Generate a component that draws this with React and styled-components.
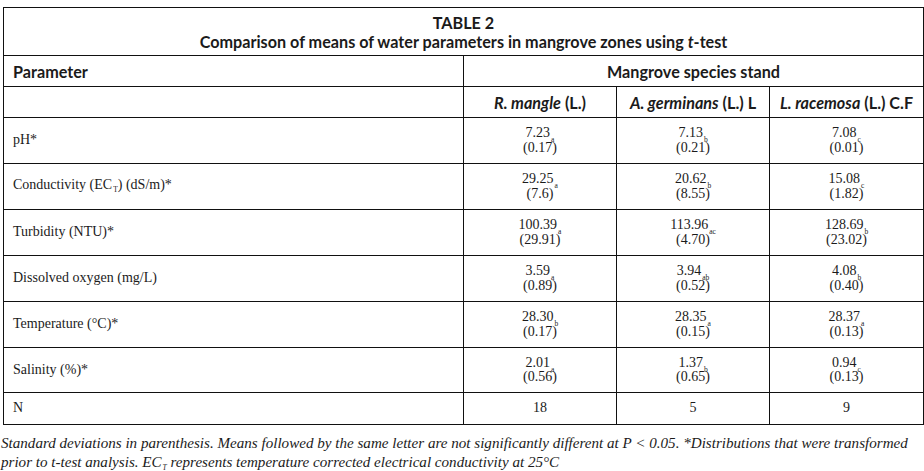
import React from "react";
import styled, { createGlobalStyle } from "styled-components";

const GlobalStyle = createGlobalStyle`
  html, body {
    margin: 0;
    padding: 0;
    background: #fff;
  }
`;

const Page = styled.div`
  padding: 7px 2px 0 3px;
  width: 924px;
  box-sizing: border-box;
  color: #1b1b1b;
`;

const Table = styled.table`
  width: 920px;
  border-collapse: collapse;
  border: 1px solid #111;
  table-layout: fixed;
`;

const Row = styled.tr`
  height: ${(p) => p.$h}px;
`;

const TitleCell = styled.td`
  font-family: Lato, "Liberation Sans", sans-serif;
  font-weight: 700;
  font-size: 16.2px;
  line-height: 19px;
  text-align: center;
  border-bottom: 1px solid #111;
  padding: 0;
  padding-top: 1px;
`;

const HeadCell = styled.th`
  font-family: Lato, "Liberation Sans", sans-serif;
  font-weight: 700;
  font-size: 16.2px;
  text-align: ${(p) => (p.$left ? "left" : "center")};
  padding: 0 0 0 ${(p) => (p.$left ? "9px" : "0")};
  border: 1px solid #111;
  vertical-align: middle;
`;

const Cell = styled.td`
  font-family: "Liberation Serif", "DejaVu Serif", serif;
  font-size: 14px;
  line-height: 12.5px;
  text-align: ${(p) => (p.$left ? "left" : "center")};
  padding: 0 0 0 ${(p) => (p.$left ? "9px" : "0")};
  border: 1px solid #111;
  vertical-align: middle;
`;

const Sub = styled.sub`
  font-size: 7.5px;
  vertical-align: baseline;
  position: relative;
  top: ${(p) => p.$top || 5}px;
  margin-left: 1px;
`;

const Line = styled.div`
  white-space: nowrap;
`;

const Note = styled.p`
  margin: 9px 0 0 -2px;
  width: 922px;
  font-family: "Liberation Serif", "DejaVu Serif", serif;
  font-style: italic;
  font-size: 15.1px;
  line-height: 19px;
  color: #1b1b1b;
`;

const species = [
  { name: "R. mangle", tail: " (L.)" },
  { name: "A. germinans", tail: " (L.) L" },
  { name: "L. racemosa", tail: " (L.) C.F" },
];

const rows = [
  { label: "pH*", vals: [["7.23", "a", "0.17"], ["7.13", "b", "0.21"], ["7.08", "c", "0.01"]] },
  {
    label: (
      <>
        Conductivity (EC<Sub $top={3}>T</Sub>) (dS/m)*
      </>
    ),
    vals: [["29.25", "a", "7.6"], ["20.62", "b", "8.55"], ["15.08", "c", "1.82"]],
  },
  { label: "Turbidity (NTU)*", vals: [["100.39", "a", "29.91"], ["113.96", "ac", "4.70"], ["128.69", "b", "23.02"]] },
  { label: "Dissolved oxygen (mg/L)", vals: [["3.59", "a", "0.89"], ["3.94", "ab", "0.52"], ["4.08", "b", "0.40"]] },
  { label: "Temperature (°C)*", vals: [["28.30", "b", "0.17"], ["28.35", "a", "0.15"], ["28.37", "a", "0.13"]] },
  { label: "Salinity (%)*", vals: [["2.01", "a", "0.56"], ["1.37", "b", "0.65"], ["0.94", "c", "0.13"]], h: 45 },
];

export default function App() {
  return (
    <Page>
      <GlobalStyle />
      <Table>
        <colgroup>
          <col style={{ width: 460 }} />
          <col style={{ width: 153 }} />
          <col style={{ width: 153 }} />
          <col style={{ width: 154 }} />
        </colgroup>
        <tbody>
          <Row $h={48}>
            <TitleCell colSpan={4}>
              <Line>TABLE 2</Line>
              <Line>
                Comparison of means of water parameters in mangrove zones using <i>t</i>-test
              </Line>
            </TitleCell>
          </Row>
          <Row $h={31}>
            <HeadCell $left>Parameter</HeadCell>
            <HeadCell colSpan={3}>Mangrove species stand</HeadCell>
          </Row>
          <Row $h={31}>
            <HeadCell />
            {species.map((s) => (
              <HeadCell key={s.name}>
                <i>{s.name}</i>
                {s.tail}
              </HeadCell>
            ))}
          </Row>
          {rows.map((r, i) => (
            <Row $h={r.h || 46} key={i}>
              <Cell $left>{r.label}</Cell>
              {r.vals.map(([m, letter, sd], j) => (
                <Cell key={j}>
                  <Line>
                    {m}
                    <Sub>{letter}</Sub>
                  </Line>
                  <Line>({sd})</Line>
                </Cell>
              ))}
            </Row>
          ))}
          <Row $h={32}>
            <Cell $left>N</Cell>
            <Cell>18</Cell>
            <Cell>5</Cell>
            <Cell>9</Cell>
          </Row>
        </tbody>
      </Table>
      <Note>
        Standard deviations in parenthesis. Means followed by the same letter are not significantly different at P &lt; 0.05.
        *Distributions that were transformed prior to t-test analysis. EC<Sub $top={3}>T</Sub> represents temperature
        corrected electrical conductivity at 25°C
      </Note>
    </Page>
  );
}
